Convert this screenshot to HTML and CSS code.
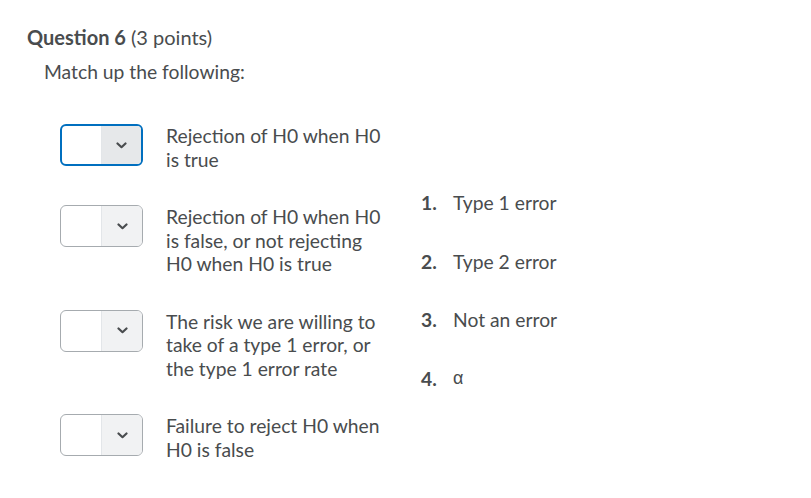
FILE: index.html
```html
<!DOCTYPE html>
<html>
<head>
<meta charset="utf-8">
<link rel="stylesheet" href="styles.css">
</head>
<body>
<div class="question">
  <h2 class="q-title"><strong>Question 6</strong> (3 points)</h2>
  <p class="q-prompt">Match up the following:</p>
  <div class="match">
    <div class="items">
      <div class="item">
        <div class="select focused"><span class="value"></span><span class="arrow"><svg width="11" height="7" viewBox="0 0 11 7"><path d="M1.5 1.5 L5.5 5.2 L9.5 1.5" fill="none" stroke="#494c4e" stroke-width="2.2" stroke-linecap="round" stroke-linejoin="round"/></svg></span></div>
        <div class="label">Rejection of H0 when H0 is true</div>
      </div>
      <div class="item">
        <div class="select"><span class="value"></span><span class="arrow"><svg width="11" height="7" viewBox="0 0 11 7"><path d="M1.5 1.5 L5.5 5.2 L9.5 1.5" fill="none" stroke="#494c4e" stroke-width="2.2" stroke-linecap="round" stroke-linejoin="round"/></svg></span></div>
        <div class="label">Rejection of H0 when H0 is false, or not rejecting H0 when H0 is true</div>
      </div>
      <div class="item">
        <div class="select"><span class="value"></span><span class="arrow"><svg width="11" height="7" viewBox="0 0 11 7"><path d="M1.5 1.5 L5.5 5.2 L9.5 1.5" fill="none" stroke="#494c4e" stroke-width="2.2" stroke-linecap="round" stroke-linejoin="round"/></svg></span></div>
        <div class="label">The risk we are willing to take of a type 1 error, or the type 1 error rate</div>
      </div>
      <div class="item">
        <div class="select"><span class="value"></span><span class="arrow"><svg width="11" height="7" viewBox="0 0 11 7"><path d="M1.5 1.5 L5.5 5.2 L9.5 1.5" fill="none" stroke="#494c4e" stroke-width="2.2" stroke-linecap="round" stroke-linejoin="round"/></svg></span></div>
        <div class="label">Failure to reject H0 when H0 is false</div>
      </div>
    </div>
    <ol class="choices">
      <li><span class="num">1.</span><span>Type 1 error</span></li>
      <li><span class="num">2.</span><span>Type 2 error</span></li>
      <li><span class="num">3.</span><span>Not an error</span></li>
      <li><span class="num">4.</span><span class="alpha">α</span></li>
    </ol>
  </div>
</div>
</body>
</html>
```
FILE: styles.css
```css
html, body {
  margin: 0;
  padding: 0;
  background: #ffffff;
}
body {
  font-family: Lato, "Open Sans", sans-serif;
  color: #494c4e;
}
.question {
  padding: 23px 0 0 27px;
}
.q-title {
  margin: 0;
  font-size: 20px;
  font-weight: 400;
  line-height: 28px;
}
.q-title strong {
  font-weight: 700;
}
.q-prompt {
  margin: 8px 0 0 17px;
  font-size: 19.3px;
  line-height: 25px;
}
.match {
  display: flex;
  align-items: center;
  margin: 40px 0 0 33px;
}
.items {
  display: flex;
  flex-direction: column;
  gap: 34px;
  width: 361px;
}
.item {
  display: flex;
  align-items: flex-start;
  gap: 23px;
}
.select {
  box-sizing: border-box;
  width: 83px;
  height: 42px;
  border: 1px solid #a6abaf;
  border-radius: 6px;
  display: flex;
  overflow: hidden;
  flex-shrink: 0;
  background: #fff;
}
.select.focused {
  border: 2px solid #006fbf;
}
.value {
  flex: 1;
}
.arrow {
  width: 40px;
  background: #f1f2f3;
  border-left: 1px solid #e3e6e9;
  display: flex;
  align-items: center;
  justify-content: center;
}
.focused .arrow {
  background: #e6e8ea;
  width: 39px;
}
.label {
  font-size: 19.3px;
  line-height: 23.5px;
  width: 224px;
}
.choices {
  list-style: none;
  margin: -4px 0 0 0;
  padding: 0;
  display: flex;
  flex-direction: column;
  gap: 35px;
}
.choices li {
  display: flex;
  font-size: 19.3px;
  line-height: 23.5px;
}
.num {
  font-weight: 700;
  width: 32px;
}
.alpha {
  font-family: "Liberation Sans", sans-serif;
  font-size: 18px;
}
```
